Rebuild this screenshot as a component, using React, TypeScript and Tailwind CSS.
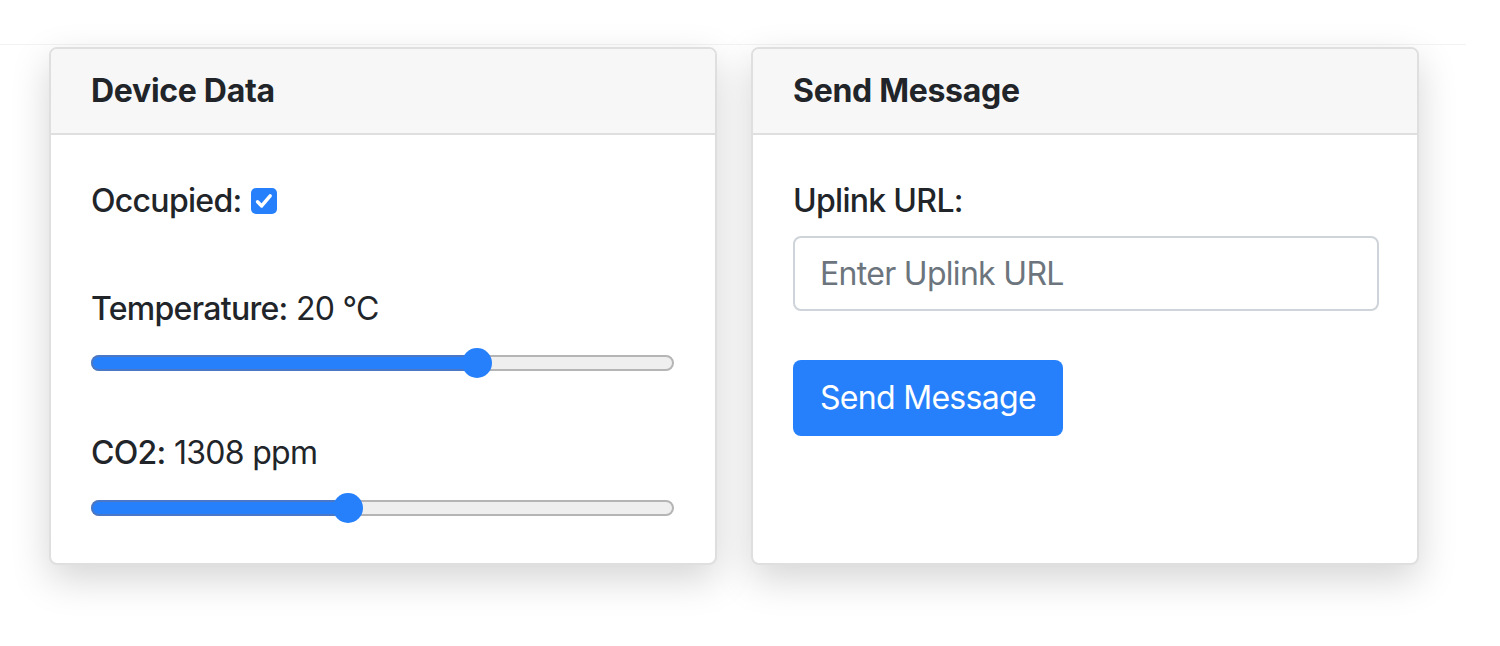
import { useState } from "react";

const Slider = ({ pos }: { pos: number }) => {
  return (
    <div className="relative h-[30px] w-[583px]">
      <div className="absolute left-0 right-0 top-[7px] h-[16px] rounded-full border-2 border-[#b5b5b5] bg-[#efefef]" />
      <div
        className="absolute left-0 top-[7px] h-[16px] rounded-l-full bg-[#2680fb] border-2 border-[#4a78c6] border-r-0"
        style={{ width: pos }}
      />
      <div
        className="absolute top-0 h-[30px] w-[30px] rounded-full bg-[#2680fb]"
        style={{ left: pos - 15 }}
      />
    </div>
  );
};

const Card = ({ title, children }: { title: string; children: React.ReactNode }) => {
  return (
    <div className="w-[668px] rounded-[8px] border-2 border-[#dfdfdf] bg-white shadow-[0_14px_38px_rgba(0,0,0,0.17)] overflow-hidden">
      <div className="border-b-2 border-[#dfdfdf] bg-[#f7f7f7] px-10 py-[23px] text-[32px] font-bold leading-[38px] tracking-[-0.3px]">
        {title}
      </div>
      <div className="px-10 pt-[40px] pb-[40px] tracking-[-0.7px]">{children}</div>
    </div>
  );
};

export default function App() {
  const [checked, setChecked] = useState(true);

  return (
    <div
      className="min-h-[646px] bg-white text-[#212529]"
      style={{ fontFamily: "Inter, 'Liberation Sans', sans-serif" }}
    >
      <div className="h-[45px] w-[1466px] border-b border-[#f3f3f3]" />
      <div className="mt-[2px] flex gap-[34px] pl-[49px]">
        <Card title="Device Data">
          <div className="flex items-center text-[32px] leading-[48px] pt-[2px]">
            <span className="font-medium">Occupied:</span>
            <button
              type="button"
              onClick={() => setChecked(!checked)}
              className="ml-[9px] flex h-[26px] w-[26px] shrink-0 items-center justify-center rounded-[5px] bg-[#2680fb]"
            >
              {checked && (
                <svg viewBox="0 0 16 16" className="h-[22px] w-[22px]" fill="none">
                  <path
                    d="M3.3 8.6l3 3 6.2-7.4"
                    stroke="white"
                    strokeWidth="2.5"
                    strokeLinecap="round"
                    strokeLinejoin="round"
                  />
                </svg>
              )}
            </button>
          </div>
          <div className="mt-[60px] text-[32px] leading-[48px]">
            <span className="font-medium">Temperature:</span> 20 °C
          </div>
          <div className="mt-[15px]">
            <Slider pos={386} />
          </div>
          <div className="mt-[51px] text-[32px] leading-[48px]">
            <span className="font-medium">CO2:</span> 1308 ppm
          </div>
          <div className="mt-[16px]">
            <Slider pos={257} />
          </div>
        </Card>
        <Card title="Send Message">
          <div className="text-[32px] leading-[48px] font-medium pt-[2px]">Uplink URL:</div>
          <input
            type="text"
            placeholder="Enter Uplink URL"
            className="mt-[11px] block h-[75px] w-[586px] rounded-[8px] border-2 border-[#ced4da] px-[25px] text-[32px] tracking-[-0.7px] outline-none placeholder:text-[#6c757d]"
          />
          <button
            type="button"
            className="mt-[49px] h-[76px] rounded-[8px] bg-[#2680fb] px-[27px] text-[32px] tracking-[-0.7px] text-white"
          >
            Send Message
          </button>
        </Card>
      </div>
    </div>
  );
}
